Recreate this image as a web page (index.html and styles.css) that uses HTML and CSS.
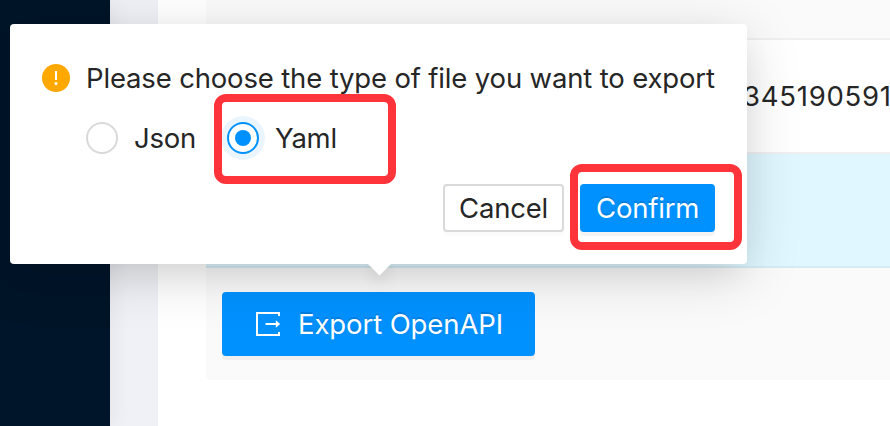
FILE: index.html
```html
<!DOCTYPE html>
<html lang="en">
<head>
<meta charset="utf-8">
<title>Export</title>
<link rel="stylesheet" href="styles.css">
</head>
<body>
<div class="page">
  <aside class="sidebar"></aside>
  <main class="content">
    <div class="table">
      <div class="row row-head"></div>
      <div class="row row-data"><span class="cell-number">345190591</span></div>
      <div class="row row-selected"></div>
      <div class="row row-footer">
        <button class="btn btn-primary btn-export">
          <svg class="export-icon" viewBox="0 0 28 28" fill="none" stroke="currentColor" stroke-width="2">
            <path d="M25 6V3H3v22h22v-3"/>
            <path d="M11.500 14h11"/>
            <path d="M21.800 10.200L26.200 14l-4.400 3.800z" fill="currentColor" stroke="none"/>
          </svg>
          <span>Export OpenAPI</span>
        </button>
      </div>
    </div>
  </main>
</div>
<div class="popover">
  <div class="title">
    <svg class="warn-icon" viewBox="0 0 28 28">
      <circle cx="14" cy="14" r="14" fill="#ffa900"/>
      <path d="M13 7h2v9h-2z" fill="#fff"/>
      <circle cx="14" cy="19.500" r="1.500" fill="#fff"/>
    </svg>
    <span>Please choose the type of file you want to export</span>
  </div>
  <div class="radios">
    <label class="radio"><span class="dot"></span><span>Json</span></label>
    <label class="radio"><span class="dot dot-on"></span><span>Yaml</span></label>
  </div>
  <div class="actions">
    <button class="btn btn-small btn-default"><span>Cancel</span></button>
    <button class="btn btn-small btn-primary btn-confirm"><span>Confirm</span></button>
  </div>
  <div class="arrow"></div>
  <div class="mark mark-yaml"></div>
  <div class="mark mark-confirm"></div>
</div>
</body>
</html>
```
FILE: styles.css
```css
* { box-sizing: border-box; }
body {
  margin: 0;
  width: 890px;
  height: 426px;
  overflow: hidden;
  position: relative;
  font: 380 27.5px/44px Inter, "Liberation Sans", sans-serif;
  letter-spacing: -.16px;
  color: #262626;
  background: #f0f2f5;
}
span { white-space: nowrap; }
.page { display: flex; gap: 48px; height: 426px; background: #eff1f6; }
.sidebar {
  width: 110px;
  flex: none;
  background: #001529;
  box-shadow: 4px 0 20px rgba(0, 21, 41, .05);
}
.content { flex: 1; min-width: 0; padding-left: 48px; background: #fff; overflow: hidden; }
.table { display: flex; flex-direction: column; }
.row { border-bottom: 2px solid #f0f0f0; height: 114px; }
.row-head { height: 40px; background: #fafafa; }
.row-data { display: flex; align-items: center; padding-left: 537px; }
.cell-number { letter-spacing: .75px; }
.row-selected { background: #e0f7ff; border-color: #d5edf4; }
.row-footer { height: 112px; border: 0; background: #fafafa; padding: 24px 16px; border-radius: 0 0 0 4px; }
.btn {
  display: flex;
  align-items: center;
  font: inherit;
  letter-spacing: -.2px;
  margin: 0;
  border: 2px solid transparent;
  border-radius: 4px;
}
.btn-primary {
  background: #0091ff;
  border-color: #0091ff;
  color: #fff;
  text-shadow: 0 -2px 0 rgba(0, 0, 0, .12);
  box-shadow: 0 4px 0 rgba(0, 0, 0, .045);
}
.btn-export { width: 313px; height: 64px; padding: 0 30px; gap: 16px; letter-spacing: -.1px; }
.export-icon { width: 28px; height: 28px; flex: none; }
.popover {
  position: absolute;
  left: 10px;
  top: 24px;
  width: 737px;
  height: 240px;
  padding: 32px;
  border-radius: 4px;
  background: #fff;
  box-shadow: 0 12px 32px -8px rgba(0, 0, 0, .08), 0 12px 56px rgba(0, 0, 0, .15);
}
.title { display: flex; align-items: center; gap: 16px; height: 44px; }
.warn-icon { width: 28px; height: 28px; flex: none; }
.radios { display: flex; margin: 16px 0 0 44px; gap: 31px; height: 44px; letter-spacing: -.25px; }
.radio { display: flex; align-items: center; gap: 16px; }
.dot {
  display: flex;
  align-items: center;
  justify-content: center;
  width: 32px;
  height: 32px;
  border: 2px solid #d9d9d9;
  border-radius: 50%;
}
.dot-on { border-color: #0091ff; box-shadow: 0 0 0 6px #ebf5ff; }
.dot-on::after { content: ""; width: 16px; height: 16px; border-radius: 50%; background: #0091ff; }
.actions { display: flex; justify-content: flex-end; gap: 16px; margin-top: 24px; }
.btn-small { height: 48px; padding: 0 14px; }
.btn-default { width: 121px; background: #fff; border-color: #d9d9d9; color: #262626; box-shadow: 0 4px 0 rgba(0, 0, 0, .016); }
.btn-confirm { width: 135px; }
.arrow {
  position: absolute;
  left: 360.5px;
  top: 231px;
  width: 17px;
  height: 17px;
  background: #fff;
  transform: rotate(45deg);
  box-shadow: 6px 6px 14px rgba(0, 0, 0, .07);
  clip-path: polygon(100% 0, 200% 0, 200% 200%, 0 200%, 0 100%);
}
.mark { position: absolute; border: 8px solid #ff333a; border-radius: 12px; }
.mark-yaml { left: 204px; top: 70px; width: 182px; height: 90px; }
.mark-confirm { left: 560px; top: 140px; width: 172px; height: 86px; }
```
